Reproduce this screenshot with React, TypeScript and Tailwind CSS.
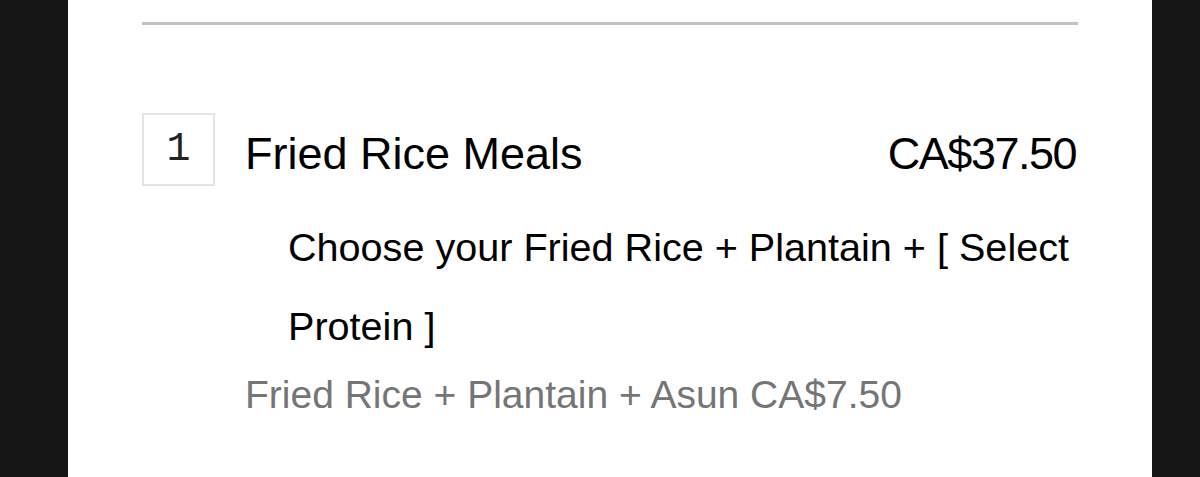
export default function App() {
  return (
    <div className="flex h-[477px] w-full overflow-hidden bg-[#161616]">
      <div
        className="ml-[68px] w-[1084px] bg-white px-[74px] pt-[22px] text-black"
        style={{ fontFamily: '"Liberation Sans", Arial, sans-serif' }}
      >
        {/* divider above the cart item */}
        <div className="h-[3px] w-[936px] bg-[#c2c2c2]" />

        <div className="mt-[88px] flex items-start gap-[30px]">
          <div className="flex h-[73px] w-[73px] shrink-0 items-center justify-center border-2 border-[#e4e4e4]">
            <span
              className="text-[40px] leading-none text-[#222]"
              style={{ fontFamily: '"Liberation Mono", "DejaVu Sans Mono", monospace' }}
            >
              1
            </span>
          </div>

          <div className="flex w-[831px] flex-col">
            <div className="flex items-start justify-between">
              <span className="text-[45px] leading-[81px]">Fried Rice Meals</span>
              <span className="text-[45px] leading-[81px] tracking-[-1.5px]">CA$37.50</span>
            </div>
            <p className="mt-[14px] pl-[43px] text-[39.6px] leading-[79px]">
              Choose your Fried Rice + Plantain + [ Select Protein ]
            </p>
            <p className="text-[39px] leading-[57px] text-[#757575]">
              Fried Rice + Plantain + Asun CA$7.50
            </p>
          </div>
        </div>
      </div>
    </div>
  );
}
